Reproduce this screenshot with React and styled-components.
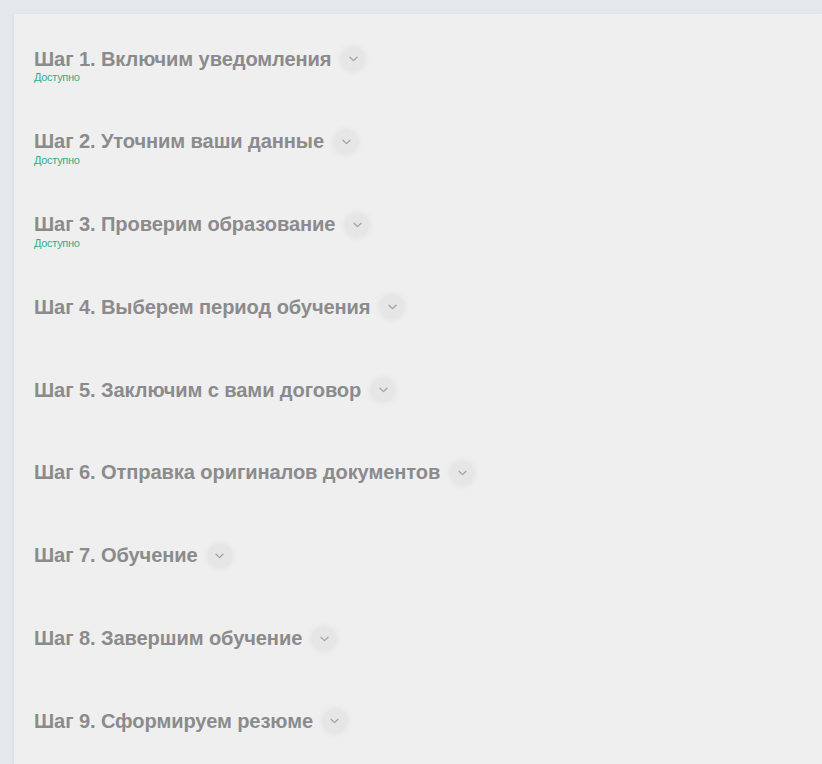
import React from "react";
import styled, { createGlobalStyle } from "styled-components";

const Global = createGlobalStyle`
  html, body { margin: 0; padding: 0; background: #e4e7eb; }
  body { font-family: "Liberation Sans", Arial, sans-serif; }
`;

const Page = styled.div`
  padding: 14px 0 0 14px;
  min-height: 764px;
  box-sizing: border-box;
  display: flex;
`;

const Card = styled.div`
  flex: 1;
  background: #efefef;
  padding: 33px 0 0 20px;
  display: grid;
  grid-auto-rows: 82.8px;
  align-content: start;
  min-height: 750px;
  box-sizing: border-box;
  box-shadow: -1px 0 2px rgba(0,0,0,0.04);
`;

const Step = styled.div`
  display: flex;
  flex-direction: column;
  align-items: flex-start;
`;

const TitleRow = styled.div`
  display: flex;
  align-items: center;
  height: 24px;
  gap: 11px;
`;

const Title = styled.span`
  font-size: 20.1px;
  font-weight: 700;
  color: #8b8b8d;
  letter-spacing: -0.1px;
  white-space: nowrap;
`;

const Toggle = styled.span`
  width: 22px;
  height: 22px;
  border-radius: 50%;
  background: #e6e6e6;
  box-shadow: 0 0 4px 2px rgba(225,225,225,0.9);
  display: inline-flex;
  align-items: center;
  justify-content: center;
`;

const Status = styled.span`
  font-size: 11px;
  color: #2fae86;
  line-height: 11px;
  margin-top: 1px;
  letter-spacing: -0.3px;
`;

const Chevron = () => (
  <svg width="9" height="6" viewBox="0 0 9 6" fill="none">
    <path d="M1 1.2 L4.5 4.6 L8 1.2" stroke="#a3a3a6" strokeWidth="1.3" strokeLinecap="round" strokeLinejoin="round" />
  </svg>
);

const steps = [
  { t: "Шаг 1. Включим уведомления", s: true },
  { t: "Шаг 2. Уточним ваши данные", s: true },
  { t: "Шаг 3. Проверим образование", s: true },
  { t: "Шаг 4. Выберем период обучения" },
  { t: "Шаг 5. Заключим с вами договор" },
  { t: "Шаг 6. Отправка оригиналов документов" },
  { t: "Шаг 7. Обучение" },
  { t: "Шаг 8. Завершим обучение" },
  { t: "Шаг 9. Сформируем резюме" },
];

export default function App() {
  return (
    <>
      <Global />
      <Page>
        <Card>
          {steps.map((st) => (
            <Step key={st.t}>
              <TitleRow>
                <Title>{st.t}</Title>
                <Toggle><Chevron /></Toggle>
              </TitleRow>
              {st.s && <Status>Доступно</Status>}
            </Step>
          ))}
        </Card>
      </Page>
    </>
  );
}
